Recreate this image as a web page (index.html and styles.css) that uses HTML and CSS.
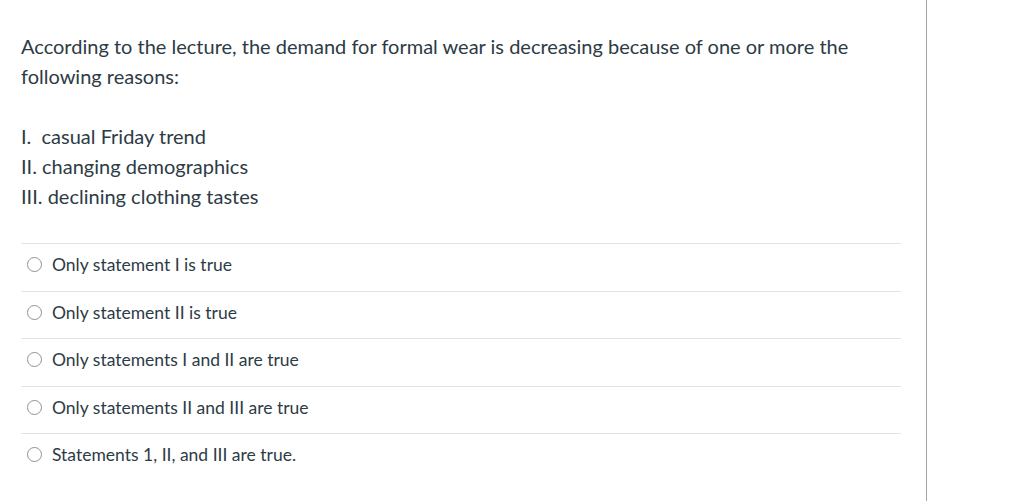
FILE: index.html
```html
<!DOCTYPE html>
<html>
<head>
<meta charset="utf-8">
<link rel="stylesheet" href="styles.css">
</head>
<body>
<div class="page">
  <div class="question">
    <p class="stem">According to the lecture, the demand for formal wear is decreasing because of one or more the following reasons:</p>
    <p class="reasons">I.&nbsp; casual Friday trend<br>II. changing demographics<br>III. declining clothing tastes</p>
    <div class="answers">
      <label class="answer"><span class="radio"></span><span>Only statement I is true</span></label>
      <label class="answer"><span class="radio"></span><span>Only statement II is true</span></label>
      <label class="answer"><span class="radio"></span><span>Only statements I and II are true</span></label>
      <label class="answer"><span class="radio"></span><span>Only statements II and III are true</span></label>
      <label class="answer"><span class="radio"></span><span>Statements 1, II, and III are true.</span></label>
    </div>
  </div>
  <div class="divider"></div>
</div>
</body>
</html>
```
FILE: styles.css
```css
html, body {
  margin: 0;
  padding: 0;
  background: #fff;
}
body {
  font-family: Lato, "Liberation Sans", sans-serif;
  color: #2d3b45;
}
.page {
  display: flex;
  height: 501px;
}
.question {
  width: 880px;
  padding: 31px 0 0 21px;
}
.divider {
  margin-left: 25px;
  width: 1px;
  background: #a3a3a3;
}
.stem, .reasons {
  margin: 0;
  font-size: 20px;
  line-height: 30px;
}
.reasons {
  margin-top: 30px;
}
.answers {
  margin-top: 32px;
}
.answer {
  display: flex;
  align-items: center;
  gap: 10px;
  box-sizing: border-box;
  height: 47.5px;
  padding-bottom: 5px;
  border-top: 1px solid #e3e3e3;
  padding-left: 6px;
  font-size: 17.5px;
}
.radio {
  width: 13px;
  height: 13px;
  border: 1px solid #909090;
  border-radius: 50%;
  background: #fff;
}
```
